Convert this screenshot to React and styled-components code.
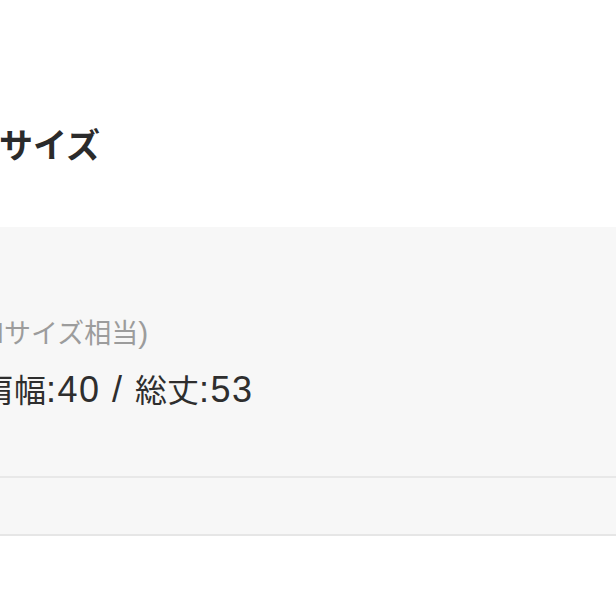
import React from 'react';
import styled, { createGlobalStyle } from 'styled-components';

const GlobalStyle = createGlobalStyle`
  html, body {
    margin: 0;
    padding: 0;
    background: #ffffff;
    overflow: hidden;
  }
  body {
    font-family: "Noto Sans CJK JP", "Noto Sans", sans-serif;
    -webkit-font-smoothing: antialiased;
  }
`;

const Page = styled.div`
  width: 616px;
  height: 616px;
  overflow: hidden;
  display: flex;
  flex-direction: column;
`;

const Header = styled.div`
  height: 227px;
  box-sizing: border-box;
  padding-top: 124px;
`;

const Title = styled.h2`
  margin: 0 0 0 ${({ $shift }) => $shift}px;
  font-size: 34px;
  line-height: 40px;
  font-weight: 700;
  color: #2b2b2b;
  white-space: nowrap;
`;

const Panel = styled.div`
  background: #f7f7f7;
  border-bottom: 2px solid #e6e6e6;
`;

const Section = styled.div`
  height: ${({ $h }) => $h}px;
  box-sizing: border-box;
  padding-top: ${({ $pt }) => $pt || 0}px;
  display: flex;
  flex-direction: column;
  border-bottom: ${({ $divider }) => ($divider ? '2px solid #e8e8e8' : 'none')};
`;

const Note = styled.div`
  margin-left: ${({ $shift }) => $shift}px;
  font-size: 27px;
  line-height: 34px;
  color: #9c9c9c;
  white-space: nowrap;
`;

const Spec = styled.div`
  margin-top: 17px;
  margin-left: ${({ $shift }) => $shift}px;
  font-size: 32px;
  line-height: 42px;
  color: #2e2e2e;
  white-space: nowrap;
`;

// latin glyphs run larger than the kana/kanji in the original
const Latin = styled.span`
  font-family: "Liberation Sans", Arial, sans-serif;
  font-size: ${({ $size }) => $size}px;
  letter-spacing: ${({ $ls }) => $ls || 0}px;
`;

export default function App() {
  return (
    <Page>
      <GlobalStyle />
      <Header>
        <Title $shift={-1}>サイズ</Title>
      </Header>
      <Panel>
        <Section $h={251} $pt={88} $divider>
          <Note $shift={-31}>
            <Latin $size={30}>(M</Latin>サイズ相当<Latin $size={30}>)</Latin>
          </Note>
          <Spec $shift={-18}>
            肩幅<Latin $size={36} $ls={1.5}>:40 / </Latin>総丈<Latin $size={36} $ls={1.5}>:53</Latin>
          </Spec>
        </Section>
        <Section $h={56} />
      </Panel>
    </Page>
  );
}
